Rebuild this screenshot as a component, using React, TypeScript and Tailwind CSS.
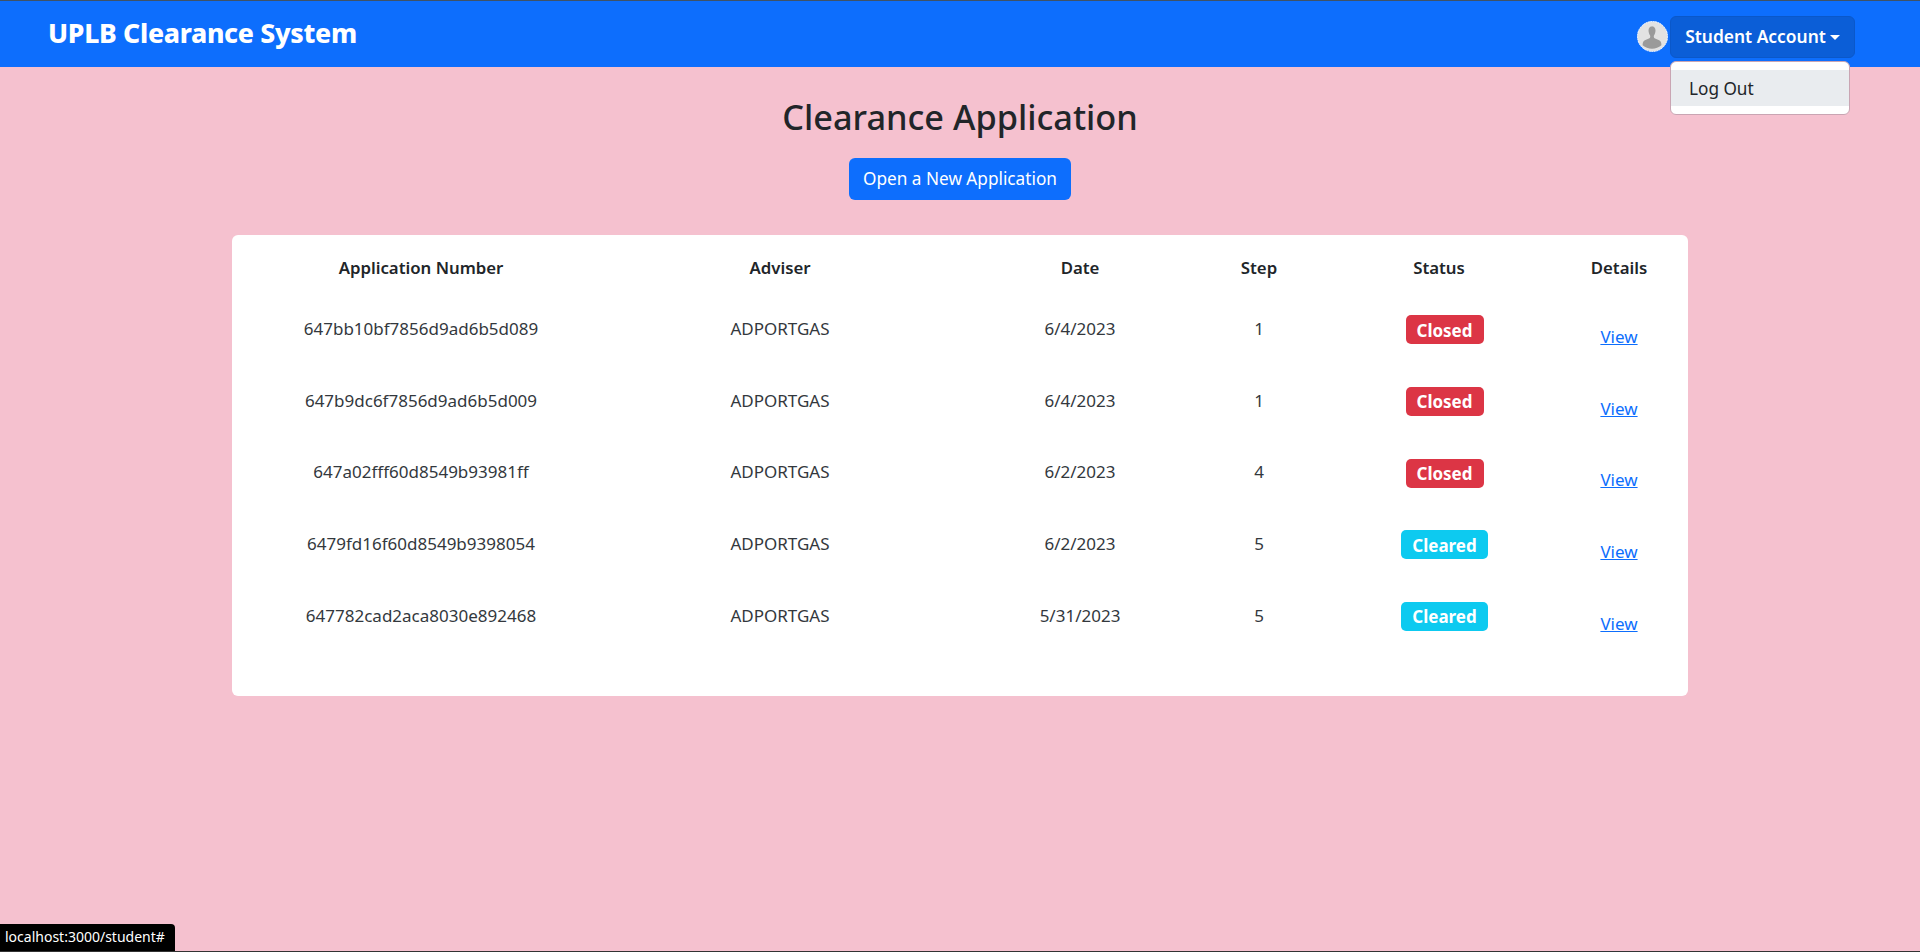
const FONT = "font-['Noto_Sans',sans-serif]";

type Row = { id: string; date: string; step: number; status: "Closed" | "Cleared" };

const rows: Row[] = [
  { id: "647bb10bf7856d9ad6b5d089", date: "6/4/2023", step: 1, status: "Closed" },
  { id: "647b9dc6f7856d9ad6b5d009", date: "6/4/2023", step: 1, status: "Closed" },
  { id: "647a02fff60d8549b93981ff", date: "6/2/2023", step: 4, status: "Closed" },
  { id: "6479fd16f60d8549b9398054", date: "6/2/2023", step: 5, status: "Cleared" },
  { id: "647782cad2aca8030e892468", date: "5/31/2023", step: 5, status: "Cleared" },
];

function Avatar() {
  return (
    <svg viewBox="0 0 32 32" className="h-[31px] w-[31px] shrink-0">
      <circle cx="16" cy="16" r="15.5" fill="#e2e2e2" stroke="#ffffff" strokeDasharray="2 0.6" />
      <path
        d="M16 5.500c-2.800 0-4.200 1.900-4.100 4.500.1 1.900.7 3.600 1.500 4.800.4.600.4 2.100-.2 2.700-1.500 1.300-5.200 1.800-6.400 3.300-.9 1.200-1 2.700-1 4.300a15 15 0 0 0 19.400 0c0-1.600-.1-3.100-1-4.300-1.200-1.500-4.900-2-6.400-3.300-.6-.6-.6-2.100-.2-2.700.8-1.200 1.400-2.900 1.500-4.800.1-2.600-1.300-4.500-4.100-4.500z"
        fill="#9a9a9a"
      />
    </svg>
  );
}

function Navbar() {
  return (
    <nav className="relative flex h-[67px] shrink-0 items-center justify-between border-t border-[#3f5266] bg-[#0d6efd] pl-[48px] pr-[65px]">
      <span className="mb-[2px] text-[26.6px] font-extrabold leading-none tracking-[-0.3px] text-white">
        UPLB Clearance System
      </span>
      <div className="relative mt-[5px] flex items-center gap-[2px]">
        <Avatar />
        <button className="flex h-[42px] w-[185px] items-center justify-center gap-[4px] rounded-md border border-[#0a58ca] bg-[#0b5ed7] text-[17.4px] font-semibold text-white">
          Student Account
          <span className="mt-[1px] h-0 w-0 border-x-[5px] border-t-[5px] border-x-transparent border-t-white" />
        </button>
        <div className="absolute left-[33px] top-[45px] z-10 w-[180px] rounded-md border border-[#c9a5b3] bg-white py-[8px]">
          <div className="bg-[#e9ecef] pb-[4px] pl-[18px] pt-[6px] text-[17.2px] leading-[26px] text-[#212529]">
            Log Out
          </div>
        </div>
      </div>
    </nav>
  );
}

function StatusBadge({ status }: { status: Row["status"] }) {
  const isClosed = status === "Closed";
  return (
    <span
      className={`ml-[7px] inline-flex h-[29px] items-center justify-center rounded-[5px] pt-[1px] text-[17px] font-bold text-white ${
        isClosed ? "w-[78px] bg-[#dc3545]" : "w-[87px] bg-[#0dcaf0]"
      }`}
    >
      {status}
    </span>
  );
}

function ApplicationTable() {
  return (
    <div className="mt-[35px] h-[461px] w-[1456px] rounded-md bg-white px-[8px] pt-[8px]">
      <table className="w-[1432px] table-fixed border-collapse text-center text-[17px] text-[#33383d]">
        <colgroup>
          <col className="w-[362px]" />
          <col className="w-[356px]" />
          <col className="w-[244px]" />
          <col className="w-[114px]" />
          <col className="w-[250px]" />
          <col className="w-[106px]" />
        </colgroup>
        <thead className="text-[16.8px] text-[#212529]">
          <tr className="h-[49px]">
            <th className="font-semibold">Application Number</th>
            <th className="font-semibold">Adviser</th>
            <th className="font-semibold">Date</th>
            <th className="font-semibold">Step</th>
            <th className="pr-[4px] font-semibold">Status</th>
            <th className="font-semibold">Details</th>
          </tr>
        </thead>
        <tbody>
          {rows.map((r) => (
            <tr key={r.id} className="h-[71.7px]">
              <td className="pt-[2px]">{r.id}</td>
              <td className="pt-[2px]">ADPORTGAS</td>
              <td className="pt-[2px]">{r.date}</td>
              <td className="pt-[2px]">{r.step}</td>
              <td className="pt-[4px]">
                <StatusBadge status={r.status} />
              </td>
              <td className="pt-[18px]">
                <a href="#" className="text-[#0d6efd] underline">
                  View
                </a>
              </td>
            </tr>
          ))}
        </tbody>
      </table>
    </div>
  );
}

export default function App() {
  return (
    <div className={`${FONT} relative flex h-[952px] flex-col overflow-hidden border-b border-[#333] bg-[#f5c1cf]`}>
      <Navbar />
      <main className="flex flex-col items-center">
        <h1 className="mt-[25px] text-[34.3px] font-medium leading-[50px] text-[#212529]">Clearance Application</h1>
        <button className="mt-[16px] h-[42px] w-[222px] rounded-md bg-[#0d6efd] text-[17.2px] text-white">
          Open a New Application
        </button>
        <ApplicationTable />
      </main>
      <div className="absolute bottom-0 left-0 h-[27px] w-[175px] rounded-tr-[4px] bg-black pl-[5px] text-[14px] leading-[26px] text-white">
        localhost:3000/student#
      </div>
    </div>
  );
}
